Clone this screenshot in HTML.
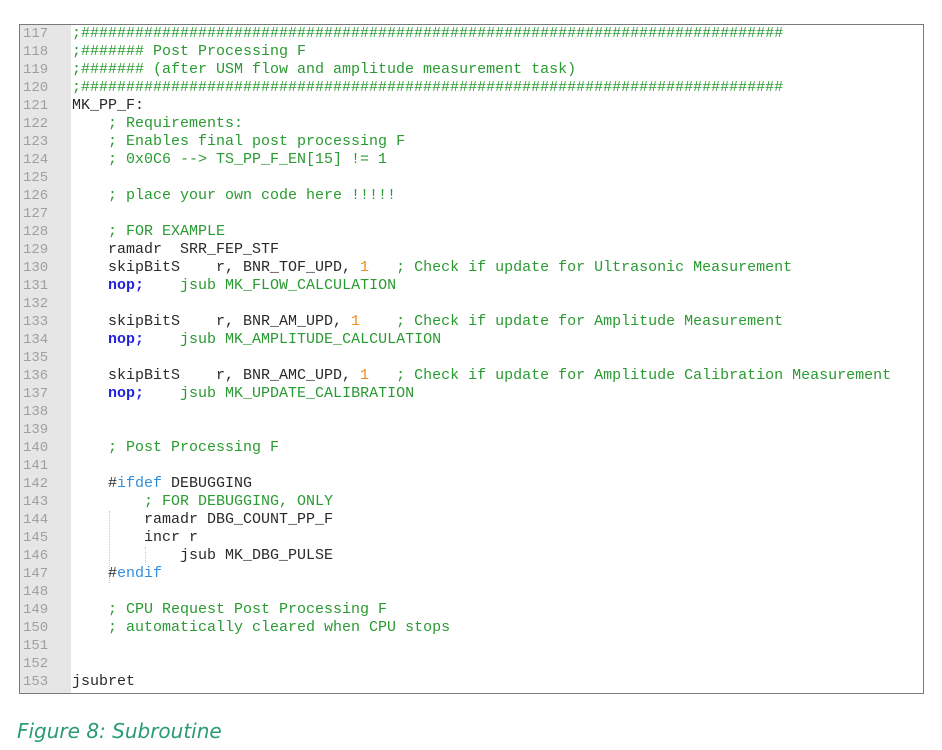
<!DOCTYPE html>
<html><head><style>
body{margin:0;background:#fff;width:942px;height:750px;position:relative;overflow:hidden}
.box{position:absolute;left:19px;top:24px;width:903px;height:668px;border:1px solid #7a7a7a;background:#fff}
.gut{position:absolute;left:0;top:0;width:51px;height:100%;background:#e6e6e6}
.code{position:absolute;left:0;top:0;font-family:"Liberation Mono",monospace;font-size:15px;line-height:18px;color:#2a2a2a;white-space:pre}
.l{height:18px;position:relative}
.n{display:inline-block;width:52px;padding-left:3px;box-sizing:border-box;color:#a0a0a0;font-size:14px}
.c{color:#2a9a32}
.o{color:#f08a1c}
.b{color:#2222dd;font-weight:bold}
.p{color:#2f8fdf}
.g1{position:absolute;left:89px;top:486px;height:72px;border-left:1px dotted #c8c8c8}
.g2{position:absolute;left:125px;top:522px;height:18px;border-left:1px dotted #c8c8c8}
.cap{position:absolute;left:17px;top:719px;font-family:"DejaVu Sans","Liberation Sans",sans-serif;font-style:italic;font-size:20px;color:#2a9a78}
</style></head><body>
<div class="box"><div class="gut"></div><div class="g1"></div><div class="g2"></div>
<div class="code" style="top:0px"><div class="l"><span class="n">117</span><span class="c">;##############################################################################</span></div><div class="l"><span class="n">118</span><span class="c">;####### Post Processing F</span></div><div class="l"><span class="n">119</span><span class="c">;####### (after USM flow and amplitude measurement task)</span></div><div class="l"><span class="n">120</span><span class="c">;##############################################################################</span></div><div class="l"><span class="n">121</span>MK_PP_F:</div><div class="l"><span class="n">122</span>    <span class="c">; Requirements:</span></div><div class="l"><span class="n">123</span>    <span class="c">; Enables final post processing F</span></div><div class="l"><span class="n">124</span>    <span class="c">; 0x0C6 --&gt; TS_PP_F_EN[15] != 1</span></div><div class="l"><span class="n">125</span></div><div class="l"><span class="n">126</span>    <span class="c">; place your own code here !!!!!</span></div><div class="l"><span class="n">127</span></div><div class="l"><span class="n">128</span>    <span class="c">; FOR EXAMPLE</span></div><div class="l"><span class="n">129</span>    ramadr  SRR_FEP_STF</div><div class="l"><span class="n">130</span>    skipBitS    r, BNR_TOF_UPD, <span class="o">1</span>   <span class="c">; Check if update for Ultrasonic Measurement</span></div><div class="l"><span class="n">131</span>    <span class="b">nop;</span><span class="c">    jsub MK_FLOW_CALCULATION</span></div><div class="l"><span class="n">132</span></div><div class="l"><span class="n">133</span>    skipBitS    r, BNR_AM_UPD, <span class="o">1</span>    <span class="c">; Check if update for Amplitude Measurement</span></div><div class="l"><span class="n">134</span>    <span class="b">nop;</span><span class="c">    jsub MK_AMPLITUDE_CALCULATION</span></div><div class="l"><span class="n">135</span></div><div class="l"><span class="n">136</span>    skipBitS    r, BNR_AMC_UPD, <span class="o">1</span>   <span class="c">; Check if update for Amplitude Calibration Measurement</span></div><div class="l"><span class="n">137</span>    <span class="b">nop;</span><span class="c">    jsub MK_UPDATE_CALIBRATION</span></div><div class="l"><span class="n">138</span></div><div class="l"><span class="n">139</span></div><div class="l"><span class="n">140</span>    <span class="c">; Post Processing F</span></div><div class="l"><span class="n">141</span></div><div class="l"><span class="n">142</span>    #<span class="p">ifdef</span> DEBUGGING</div><div class="l"><span class="n">143</span>        <span class="c">; FOR DEBUGGING, ONLY</span></div><div class="l"><span class="n">144</span>        ramadr DBG_COUNT_PP_F</div><div class="l"><span class="n">145</span>        incr r</div><div class="l"><span class="n">146</span>            jsub MK_DBG_PULSE</div><div class="l"><span class="n">147</span>    #<span class="p">endif</span></div><div class="l"><span class="n">148</span></div><div class="l"><span class="n">149</span>    <span class="c">; CPU Request Post Processing F</span></div><div class="l"><span class="n">150</span>    <span class="c">; automatically cleared when CPU stops</span></div><div class="l"><span class="n">151</span></div><div class="l"><span class="n">152</span></div><div class="l"><span class="n">153</span>jsubret</div></div>
</div>
<div class="cap">Figure 8: Subroutine</div>
</body></html>
